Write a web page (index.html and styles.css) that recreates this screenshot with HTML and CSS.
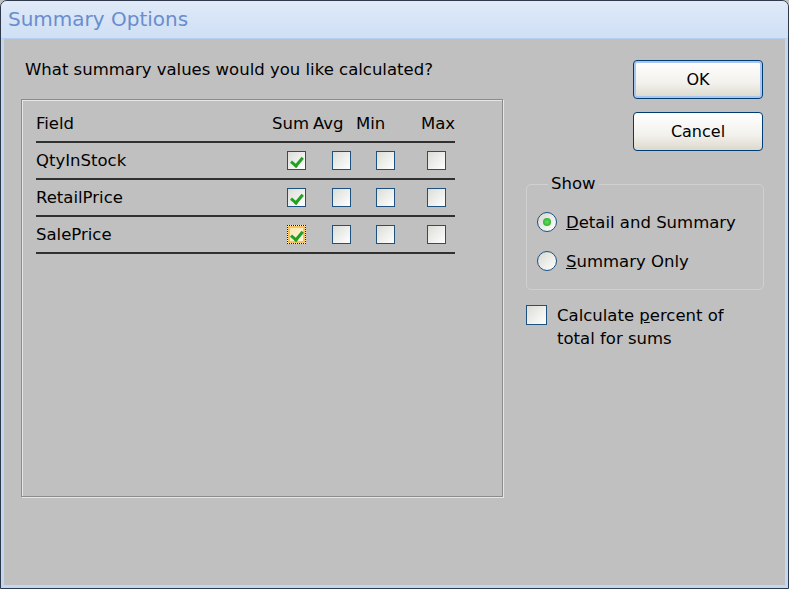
FILE: index.html
```html
<!DOCTYPE html>
<html lang="en">
  <head>
    <meta charset="UTF-8" />
    <title>Summary Options</title>
    <link rel="stylesheet" href="styles.css">
  </head>
  <body>
    <div class="window">
      <div class="titlebar">Summary Options</div>

      <div class="client">
        <div class="left-col">
          <p class="prompt">What summary values would you like calculated?</p>

          <div class="listbox">
            <div class="list-head">
              <span>Field</span>
              <span>Sum</span>
              <span>Avg</span>
              <span>Min</span>
              <span>Max</span>
            </div>

            <div class="list-row">
              <span>QtyInStock</span>
              <span class="check checked"></span>
              <span class="check"></span>
              <span class="check"></span>
              <span class="check"></span>
            </div>
            <div class="list-row">
              <span>RetailPrice</span>
              <span class="check checked"></span>
              <span class="check"></span>
              <span class="check"></span>
              <span class="check"></span>
            </div>
            <div class="list-row">
              <span>SalePrice</span>
              <span class="check checked focus"></span>
              <span class="check"></span>
              <span class="check"></span>
              <span class="check"></span>
            </div>
          </div>
        </div>

        <div class="right-col">
          <div class="buttons">
            <button class="btn btn-default">OK</button>
            <button class="btn">Cancel</button>
          </div>

          <fieldset class="show-group">
            <legend>Show</legend>
            <div class="radio-row">
              <span class="radio selected"></span>
              <span><u>D</u>etail and Summary</span>
            </div>
            <div class="radio-row">
              <span class="radio"></span>
              <span><u>S</u>ummary Only</span>
            </div>
          </fieldset>

          <div class="percent-row">
            <span class="check"></span>
            <span class="percent-text">Calculate <u>p</u>ercent of<br />total for sums</span>
          </div>
        </div>
      </div>
    </div>
  </body>
</html>
```

FILE: styles.css
```css
/* Basis */
body {
  margin: 0;
  padding: 0;
  font-family: Tahoma, "DejaVu Sans", sans-serif;
  font-size: 16.5px;
  color: #000;
  background-color: #c0c0c0;
}

/* Vindue */
.window {
  width: 789px;
  height: 589px;
  box-sizing: border-box;
  border: 1px solid #2e3a4c;
  border-radius: 7px 7px 0 0;
  background-color: #c4d7f0;
  display: flex;
  flex-direction: column;
  overflow: hidden;
}

.titlebar {
  height: 37px;
  flex-shrink: 0;
  padding-left: 7px;
  line-height: 36px;
  font-size: 20px;
  color: #6a8dcd;
  background: linear-gradient(#e0eaf8, #cfdff5);
  border-bottom: 1px solid #b7cfee;
}

.client {
  flex: 1;
  margin: 0 3px 3px;
  background-color: #c0c0c0;
  display: grid;
  grid-template-columns: 482px 238px;
  column-gap: 23px;
  align-items: start;
  padding: 21px 0 0 17px;
}

/* Venstre kolonne */
.prompt {
  margin: 0;
  padding-left: 4px;
  line-height: 20px;
}

.listbox {
  box-sizing: border-box;
  margin-top: 19px;
  height: 398px;
  border: 1px solid #8c8c8c;
  box-shadow: inset 1px 1px 0 #e6e6e6, 1px 1px 0 #e6e6e6;
  padding: 11px 0 0 14px;
}

.list-head {
  width: 419px;
  display: grid;
  grid-template-columns: 236px 41px 43px 65px 34px;
  line-height: 26px;
  padding-bottom: 4px;
  border-bottom: 2px solid #303030;
}

.list-row {
  width: 419px;
  height: 35px;
  display: grid;
  grid-template-columns: 251px 45px 44px 51px 28px;
  align-items: center;
  border-bottom: 2px solid #303030;
}

/* Afkrydsningsfelter */
.check {
  display: block;
  width: 17px;
  height: 17px;
  border: 1px solid #1c5180;
  background: linear-gradient(135deg, #dcdcd7, #ffffff);
  position: relative;
}

.check.checked::after {
  content: "";
  position: absolute;
  left: 4px;
  top: 3px;
  width: 5px;
  height: 9px;
  border-right: 3px solid #21a121;
  border-bottom: 3px solid #21a121;
  transform: rotate(40deg);
  transform-origin: 60% 60%;
}

.check.focus {
  border: 1px dotted #1a1a1a;
  box-shadow: inset 0 0 0 2px #f9c35a;
  background: linear-gradient(135deg, #fbe5a8, #fff8e6);
}

/* Højre kolonne */
.buttons {
  display: flex;
  flex-direction: column;
  align-items: flex-end;
  gap: 13px;
  padding-right: 1px;
}

.btn {
  width: 130px;
  height: 39px;
  font-family: inherit;
  font-size: 16px;
  color: #000;
  border: 1px solid #003c74;
  border-radius: 4px;
  background: linear-gradient(#ffffff, #f2f1ec 60%, #dcd8cd);
  cursor: pointer;
}

.btn-default {
  box-shadow: inset 0 0 0 2px #a9c6f0;
}

.show-group {
  margin: 23px 0 0;
  padding: 15px 0 15px 10px;
  border: 1px solid #d0d0d0;
  border-radius: 5px;
}

.show-group legend {
  margin-left: 11px;
  padding: 0 3px;
  line-height: 20px;
}

.radio-row {
  display: flex;
  align-items: center;
  gap: 9px;
  height: 26px;
}

.radio-row + .radio-row {
  margin-top: 13px;
}

.radio {
  display: block;
  width: 18px;
  height: 18px;
  border: 1px solid #1c5180;
  border-radius: 50%;
  background: linear-gradient(135deg, #d8d8d2, #ffffff);
  position: relative;
}

.radio.selected::after {
  content: "";
  position: absolute;
  left: 5px;
  top: 5px;
  width: 8px;
  height: 8px;
  border-radius: 50%;
  background: radial-gradient(#5fe05f, #21a121);
}

.percent-row {
  display: flex;
  align-items: flex-start;
  gap: 10px;
  margin-top: 14px;
}

.percent-row .check {
  width: 19px;
  height: 18px;
  margin-top: 1px;
}

.percent-text {
  line-height: 23px;
}
```
